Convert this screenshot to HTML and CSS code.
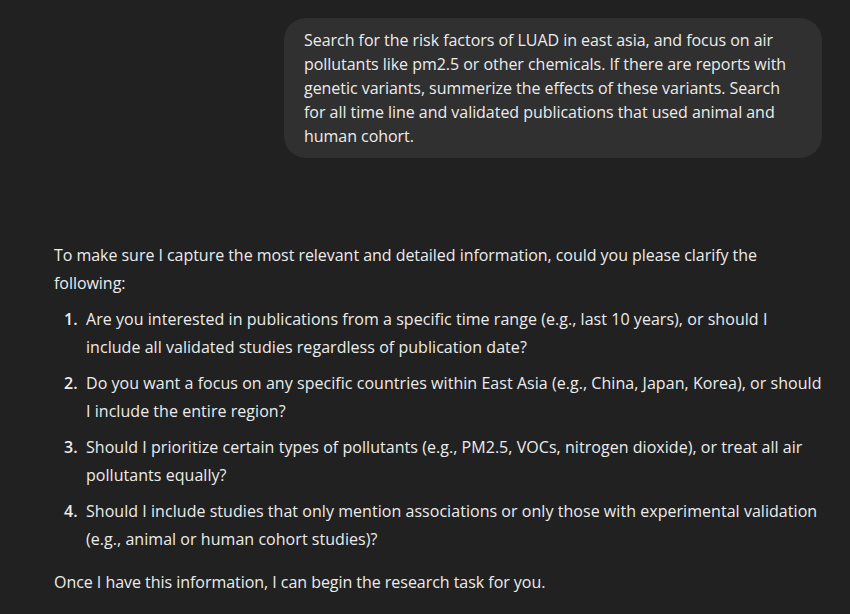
FILE: index.html
```html
<!DOCTYPE html>
<html>

<head>
  <title>Research request</title>
  <meta name="viewport" content="width=device-width, initial-scale=1">
  <link rel="stylesheet" href="styles.css">
</head>

<body>

  <div class="thread">

    <!-- user message -->
    <div class="turn user">
      <div class="bubble">
        Search for the risk factors of LUAD in east asia, and focus on air pollutants like pm2.5 or other chemicals. If there are reports with genetic variants, summerize the effects of these variants. Search for all time line and validated publications that used animal and human cohort.
      </div>
    </div>

    <!-- assistant reply -->
    <div class="turn assistant">
      <p>To make sure I capture the most relevant and detailed information, could you please clarify the following:</p>
      <ol>
        <li><span>Are you interested in publications from a specific time range (e.g., last 10 years), or should I include all validated studies regardless of publication date?</span></li>
        <li><span>Do you want a focus on any specific countries within East Asia (e.g., China, Japan, Korea), or should I include the entire region?</span></li>
        <li><span>Should I prioritize certain types of pollutants (e.g., PM2.5, VOCs, nitrogen dioxide), or treat all air pollutants equally?</span></li>
        <li><span>Should I include studies that only mention associations or only those with experimental validation (e.g., animal or human cohort studies)?</span></li>
      </ol>
      <p class="last">Once I have this information, I can begin the research task for you.</p>
    </div>

  </div>

</body>

</html>
```
FILE: styles.css
```css
body {
  margin: 0;
  background: #212121;
  color: #ececec;
  font-family: "Open Sans", "Noto Sans", sans-serif;
  font-size: 16px;
  letter-spacing: -0.04px;
  overflow: hidden;
}

* {
  box-sizing: border-box;
}

/* Centered conversation column */
.thread {
  width: 768px;
  margin-left: 54px;
  padding-top: 18px;
}

/* The user's message sits on the right in a rounded bubble */
.user {
  display: flex;
  justify-content: flex-end;
}

.bubble {
  width: 538px;
  background: #303030;
  border-radius: 22px;
  padding: 10px 20px;
  line-height: 24px;
}

/* Assistant answer */
.assistant {
  margin-top: 84px;
  line-height: 27.5px;
}

.assistant p {
  margin: 0;
}

.assistant ol {
  margin: 9px 0 0 0;
  padding: 0;
  list-style: none;
  counter-reset: item;
  letter-spacing: 0.045px;
}

/* Number column on the left, text wraps in its own column */
.assistant li {
  display: grid;
  grid-template-columns: 32px 1fr;
  margin-top: 9px;
  counter-increment: item;
}

.assistant li:first-child {
  margin-top: 0;
}

.assistant li::before {
  content: counter(item) ".";
  font-weight: 600;
  padding-left: 10px;
}

.assistant p.last {
  margin-top: 15.5px;
}
```
